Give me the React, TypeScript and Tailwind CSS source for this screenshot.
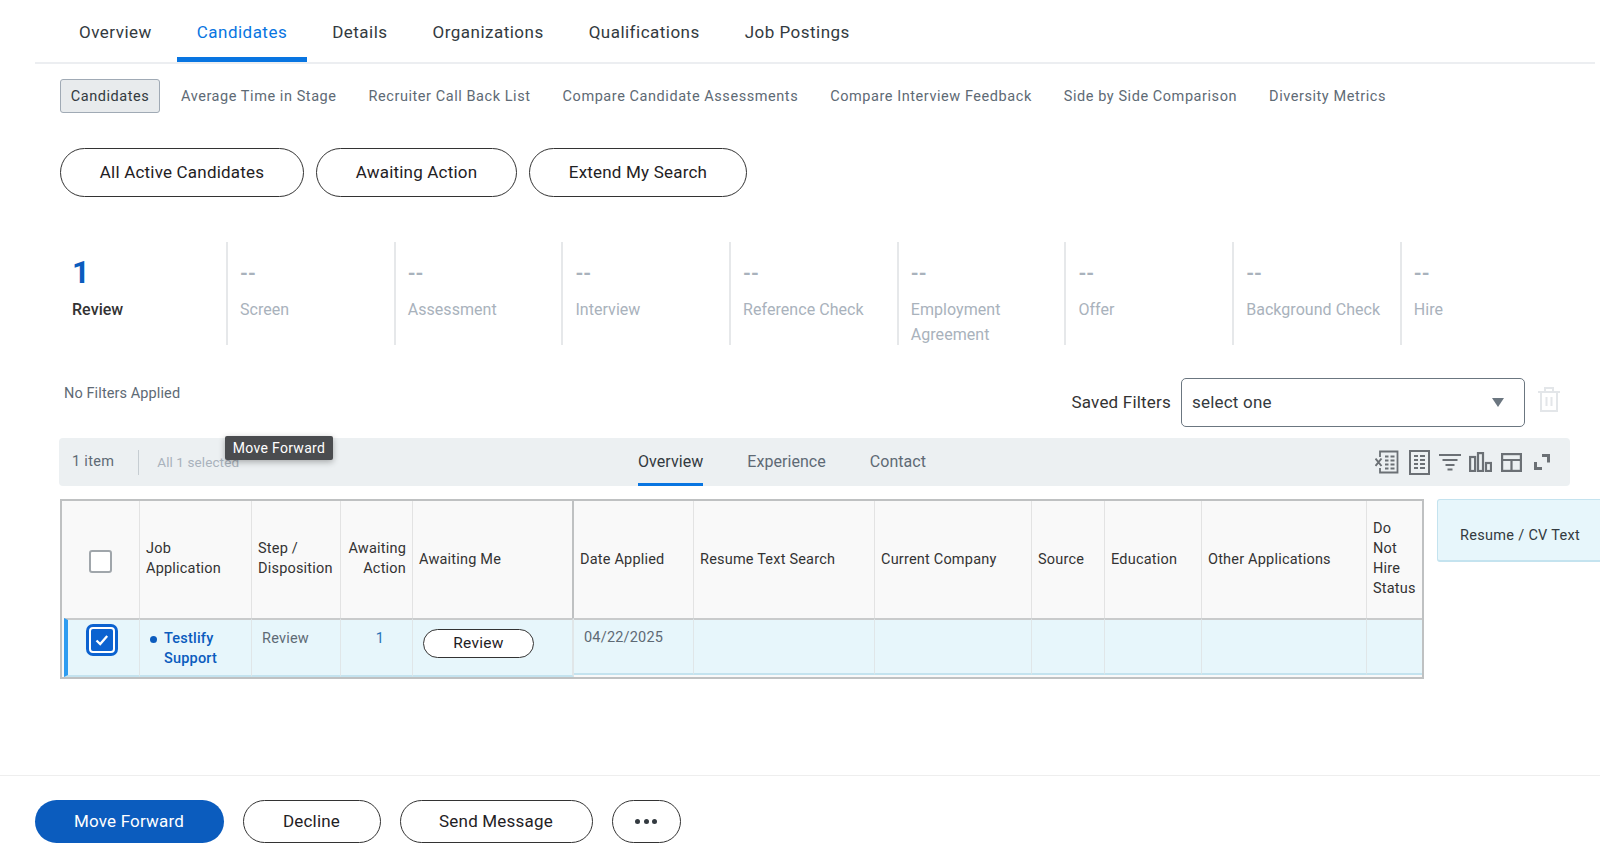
const font = "font-['Roboto',sans-serif]";

const topTabs = ["Overview", "Candidates", "Details", "Organizations", "Qualifications", "Job Postings"];
const subTabs = ["Average Time in Stage", "Recruiter Call Back List", "Compare Candidate Assessments", "Compare Interview Feedback", "Side by Side Comparison", "Diversity Metrics"];
const stages: [string, string][] = [["--", "Screen"], ["--", "Assessment"], ["--", "Interview"], ["--", "Reference Check"], ["--", "Employment Agreement"], ["--", "Offer"], ["--", "Background Check"], ["--", "Hire"]];

function Pill({ children, className = "" }: { children: React.ReactNode; className?: string }) {
  return (
    <div className={`flex items-center justify-center rounded-full border border-[#333333] bg-white font-[450] text-[#1f2124] ${className}`}>
      {children}
    </div>
  );
}

function ExcelIcon() {
  return (
    <svg width="24" height="24" viewBox="0 0 24 24" fill="none" stroke="#6b7075">
      <path d="M5 7V1.500h17.500v21H5V18" strokeWidth="1.800" />
      <path d="M0.500 8.500l6 7.500M6.500 8.500l-6 7.500" strokeWidth="2" />
      <path d="M10 6.500h3.500M15.500 6.500h4M10 10.500h3.500M15.500 10.500h4M10 14.500h3.500M15.500 14.500h4M10 18.500h3.500M15.500 18.500h4" strokeWidth="2" />
    </svg>
  );
}
function SheetIcon() {
  return (
    <svg width="21" height="25" viewBox="0 0 21 25" fill="none" stroke="#6b7075">
      <rect x="1" y="1" width="19" height="23" strokeWidth="2" />
      <path d="M5 6h4M11 6h5M5 10h4M11 10h5M5 14h4M11 14h5M5 18h4M11 18h5" strokeWidth="2.200" />
    </svg>
  );
}
function FilterIcon() {
  return (
    <svg width="22" height="18" viewBox="0 0 22 18" fill="none" stroke="#6b7075" strokeWidth="2">
      <path d="M0 2h22M3.500 7h15M6.500 12h9M8.500 16.500h5" />
    </svg>
  );
}
function BarsIcon() {
  return (
    <svg width="23" height="20" viewBox="0 0 23 20" fill="none" stroke="#6b7075" strokeWidth="2.200">
      <rect x="1.100" y="5" width="5" height="14" />
      <rect x="9" y="1.100" width="5" height="17.900" />
      <rect x="17" y="11" width="5" height="8" />
    </svg>
  );
}
function LayoutIcon() {
  return (
    <svg width="21" height="19" viewBox="0 0 21 19" fill="none" stroke="#6b7075" strokeWidth="2.200">
      <rect x="1.100" y="1.100" width="18.800" height="16.800" />
      <path d="M1 7h19M10.500 7v11" />
    </svg>
  );
}
function ExpandIcon() {
  return (
    <svg width="18" height="18" viewBox="0 0 18 18" fill="none" stroke="#6b7075" strokeWidth="3">
      <path d="M9 2.500h6.500v7M2.500 9v6.500H9" />
    </svg>
  );
}
function TrashIcon() {
  return (
    <svg width="22" height="25" viewBox="0 0 22 25" fill="none" stroke="#e3e6e9" strokeWidth="2">
      <path d="M0 5h22M7 5V1h8v4M3 5v19h16V5M8.500 10v9M13.500 10v9" />
    </svg>
  );
}

function HeaderCell({ children, className = "" }: { children: React.ReactNode; className?: string }) {
  return (
    <div className={`flex items-center border-r border-[#e3e3e3] px-[6px] text-[14.500px] leading-[20px] tracking-[0.2px] text-[#333333] ${className}`}>
      {children}
    </div>
  );
}

function RowCell({ children, className = "" }: { children?: React.ReactNode; className?: string }) {
  return <div className={`border-t-2 border-r border-b-2 border-t-[#c9cbcc] border-r-[#e0e6e8] border-b-[#c4e3ef] bg-[#e7f6fb] text-[14.500px] leading-[20px] tracking-[0.2px] ${className}`}>{children}</div>;
}

export default function App() {
  return (
    <div className={`${font} relative flex h-[848px] w-[1600px] flex-col overflow-hidden bg-white`}>
      <div className="ml-[35px] mr-[5px] flex h-[64px] items-stretch gap-[5px] border-b-2 border-[#eceef1] pl-[24px]">
        {topTabs.map((t) => (
          <div
            key={t}
            className={`flex h-[62px] items-center rounded-t-[4px] border-b-[5px] px-[20px] pt-[8px] text-[17px] font-[450] tracking-[0.48px] ${t === "Candidates" ? "border-[#0875e1] text-[#0875e1]" : "border-transparent text-[#333a40]"}`}
          >
            {t}
          </div>
        ))}
      </div>

      <div className="ml-[60px] mt-[15px] flex h-[34px] items-center gap-[32px] pt-[1px] text-[14.500px] tracking-[0.56px] text-[#5e6a75]">
        <div className="-mt-[1px] flex h-[34px] w-[100px] items-center justify-center rounded-[3px] border border-[#a0aab5] bg-[#e8ebed] pt-[1px] text-[#333a40]">Candidates</div>
        <div className="-ml-[11px] flex gap-[32px]">
          {subTabs.map((t) => (
            <span key={t}>{t}</span>
          ))}
        </div>
      </div>

      <div className="ml-[60px] mt-[35px] flex h-[49px] gap-[12px] text-[17px] tracking-[0.2px]">
        <Pill className="w-[244px]">All Active Candidates</Pill>
        <Pill className="w-[201px]">Awaiting Action</Pill>
        <Pill className="w-[218px]">Extend My Search</Pill>
      </div>

      <div className="ml-[60px] mt-[45px] flex h-[103px] text-[16px] tracking-[0.05px]">
        <div className="w-[166px] pl-[12px]">
          <div className="mt-[18px] h-[26px] text-[31px] font-bold leading-[26px] text-[#0b5cbe]">1</div>
          <div className="mt-[12px] font-medium leading-[24px] text-[#333333]">Review</div>
        </div>
        {stages.map(([v, s]) => (
          <div key={s} className="w-[167.700px] shrink-0 border-l-2 border-[#e6e8ea] pl-[12px] pr-[8px] text-[#a9b2bc]">
            <div className="mt-[18px] h-[26px] text-[20px] font-bold leading-[26px]">{v}</div>
            <div className="mt-[12px] leading-[24.500px]">{s}</div>
          </div>
        ))}
      </div>

      <div className="relative mt-[33px] flex h-[49px] items-start pl-[64px] pr-[41px]">
        <div className="mt-[6px] text-[14.500px] leading-[20px] tracking-[0.1px] text-[#5e6a75]">No Filters Applied</div>
        <div className="ml-auto flex items-center">
          <span className="mr-[10px] text-[17px] font-[430] tracking-[0.2px] text-[#333333]">Saved Filters</span>
          <div className="flex h-[49px] w-[344px] items-center justify-between rounded-[5px] border border-[#6b7680] pl-[10px] pr-[20px] text-[17px] tracking-[0.2px] text-[#333a40]">
            <span>select one</span>
            <svg width="12" height="9" viewBox="0 0 12 9" fill="#6b7680"><path d="M0 0h12L6 9z" /></svg>
          </div>
          <div className="-mt-[6px] ml-[13px] mr-[-1px]"><TrashIcon /></div>
        </div>
      </div>

      <div className="relative ml-[59px] mt-[11px] flex h-[48px] w-[1511px] shrink-0 items-center rounded-[4px] bg-[#ecf0f2] text-[14.500px] tracking-[0.3px]">
        <span className="ml-[13px] text-[#5e6a75]">1 item</span>
        <span className="ml-[24px] h-[25px] w-px bg-[#c6cdd2]" />
        <span className="ml-[18px] text-[13.500px] tracking-[0.1px] text-[#a9b2bc]">All 1 selected</span>
        <div className="absolute left-[579px] top-0 flex h-[48px] items-stretch gap-[44px] text-[16px] tracking-[0.05px] text-[#5e6a75]">
          <div className="flex items-center border-b-[3px] border-[#0875e1] pt-[3px] text-[#333a40]">Overview</div>
          <div className="flex items-center">Experience</div>
          <div className="flex items-center">Contact</div>
        </div>
        <div className="ml-auto mr-[19px] flex items-center">
          <ExcelIcon />
          <div className="ml-[10px]"><SheetIcon /></div>
          <div className="ml-[9px]"><FilterIcon /></div>
          <div className="ml-[8px]"><BarsIcon /></div>
          <div className="ml-[9px]"><LayoutIcon /></div>
          <div className="ml-[11px]"><ExpandIcon /></div>
        </div>
        <div className="absolute left-[166px] top-[-2px] flex h-[24px] w-[108px] items-center justify-center rounded-[2px] bg-[#4a4c4f] text-[14px] tracking-[0.3px] text-white shadow-[0_2px_6px_rgba(0,0,0,0.3)]">
          Move Forward
        </div>
      </div>

      <div className="ml-[60px] mt-[13px] flex shrink-0 items-start gap-[13px]">
        <div className="grid w-[1364px] shrink-0 grid-cols-[78px_112px_89px_72px_161px_120px_181px_157px_73px_97px_165px_55px] grid-rows-[117px_59px] border-2 border-[#bfc1c2] bg-[#f9f9f9]">
          <HeaderCell className="justify-center">
            <div className="mt-[3px] h-[23px] w-[23px] rounded-[3px] border-2 border-[#a0a6ab] bg-white" />
          </HeaderCell>
          <HeaderCell className="pb-[1px]">Job<br />Application</HeaderCell>
          <HeaderCell className="pb-[1px]">Step /<br />Disposition</HeaderCell>
          <HeaderCell className="justify-end pb-[1px] text-right">Awaiting<br />Action</HeaderCell>
          <HeaderCell className="border-r-2 border-r-[#bfc1c2]">Awaiting Me</HeaderCell>
          <HeaderCell>Date Applied</HeaderCell>
          <HeaderCell>Resume Text Search</HeaderCell>
          <HeaderCell>Current Company</HeaderCell>
          <HeaderCell>Source</HeaderCell>
          <HeaderCell>Education</HeaderCell>
          <HeaderCell>Other Applications</HeaderCell>
          <HeaderCell className="border-r-0 pb-[2px]">Do<br />Not<br />Hire<br />Status</HeaderCell>

          <RowCell className="ml-[2px] border-l-[4px] border-l-[#2e9cf0]">
            <div className="ml-[18px] mt-[4px] flex h-[32px] w-[32px] items-center justify-center rounded-[7px] border-[3px] border-[#0b62d0] bg-white">
              <div className="flex h-[22px] w-[22px] items-center justify-center rounded-[2px] bg-[#0b62d0]">
                <svg width="14" height="12" viewBox="0 0 14 12" fill="none" stroke="white" strokeWidth="2.300"><path d="M1.500 6.500l3.700 3.500 7-8" /></svg>
              </div>
            </div>
          </RowCell>
          <RowCell className="pl-[10px] pt-[9px] font-medium text-[#0b5cbe]">
            <div className="flex">
              <span className="mr-[7px] mt-[7px] h-[7px] w-[7px] shrink-0 rounded-full bg-[#0b5cbe]" />
              <span>Testlify<br />Support</span>
            </div>
          </RowCell>
          <RowCell className="pl-[10px] pt-[9px] text-[#5e6a75]">Review</RowCell>
          <RowCell className="pr-[28px] pt-[9px] text-right text-[#2a73b8]">1</RowCell>
          <RowCell className="border-r-2 border-r-[#bfc1c2] pl-[10px] pt-[9px]">
            <Pill className="h-[29px] w-[111px] pb-[2px] text-[15.500px] tracking-[0.3px]">Review</Pill>
          </RowCell>
          <RowCell className="mb-[2px] pl-[10px] pt-[8px] text-[#5e6a75]">04/22/2025</RowCell>
          <RowCell className="mb-[2px]" />
          <RowCell className="mb-[2px]" />
          <RowCell className="mb-[2px]" />
          <RowCell className="mb-[2px]" />
          <RowCell className="mb-[2px]" />
          <RowCell className="mb-[2px] border-r-0" />
        </div>
        <div className="flex h-[63px] w-[170px] shrink-0 items-center rounded-[3px] border border-b-2 border-[#c4e3ef] bg-[#e7f6fb] pl-[22px] pt-[12px] text-[14.500px] tracking-[0.3px] text-[#333a40]">
          Resume / CV Text
        </div>
      </div>

      <div className="mt-auto flex h-[73px] shrink-0 items-start gap-[19px] border-t border-[#eeeeee] pl-[34.500px] pt-[24px] text-[17px] tracking-[0.2px]">
        <div className="flex h-[43px] w-[189px] items-center justify-center rounded-full bg-[#0b5cbe] font-[450] text-white">Move Forward</div>
        <Pill className="h-[43px] w-[138px]">Decline</Pill>
        <Pill className="h-[43px] w-[193px]">Send Message</Pill>
        <Pill className="h-[43px] w-[69px]">
          <span className="flex gap-[3.500px]">
            <span className="h-[5px] w-[5px] rounded-full bg-[#333a40]" />
            <span className="h-[5px] w-[5px] rounded-full bg-[#333a40]" />
            <span className="h-[5px] w-[5px] rounded-full bg-[#333a40]" />
          </span>
        </Pill>
      </div>
    </div>
  );
}
